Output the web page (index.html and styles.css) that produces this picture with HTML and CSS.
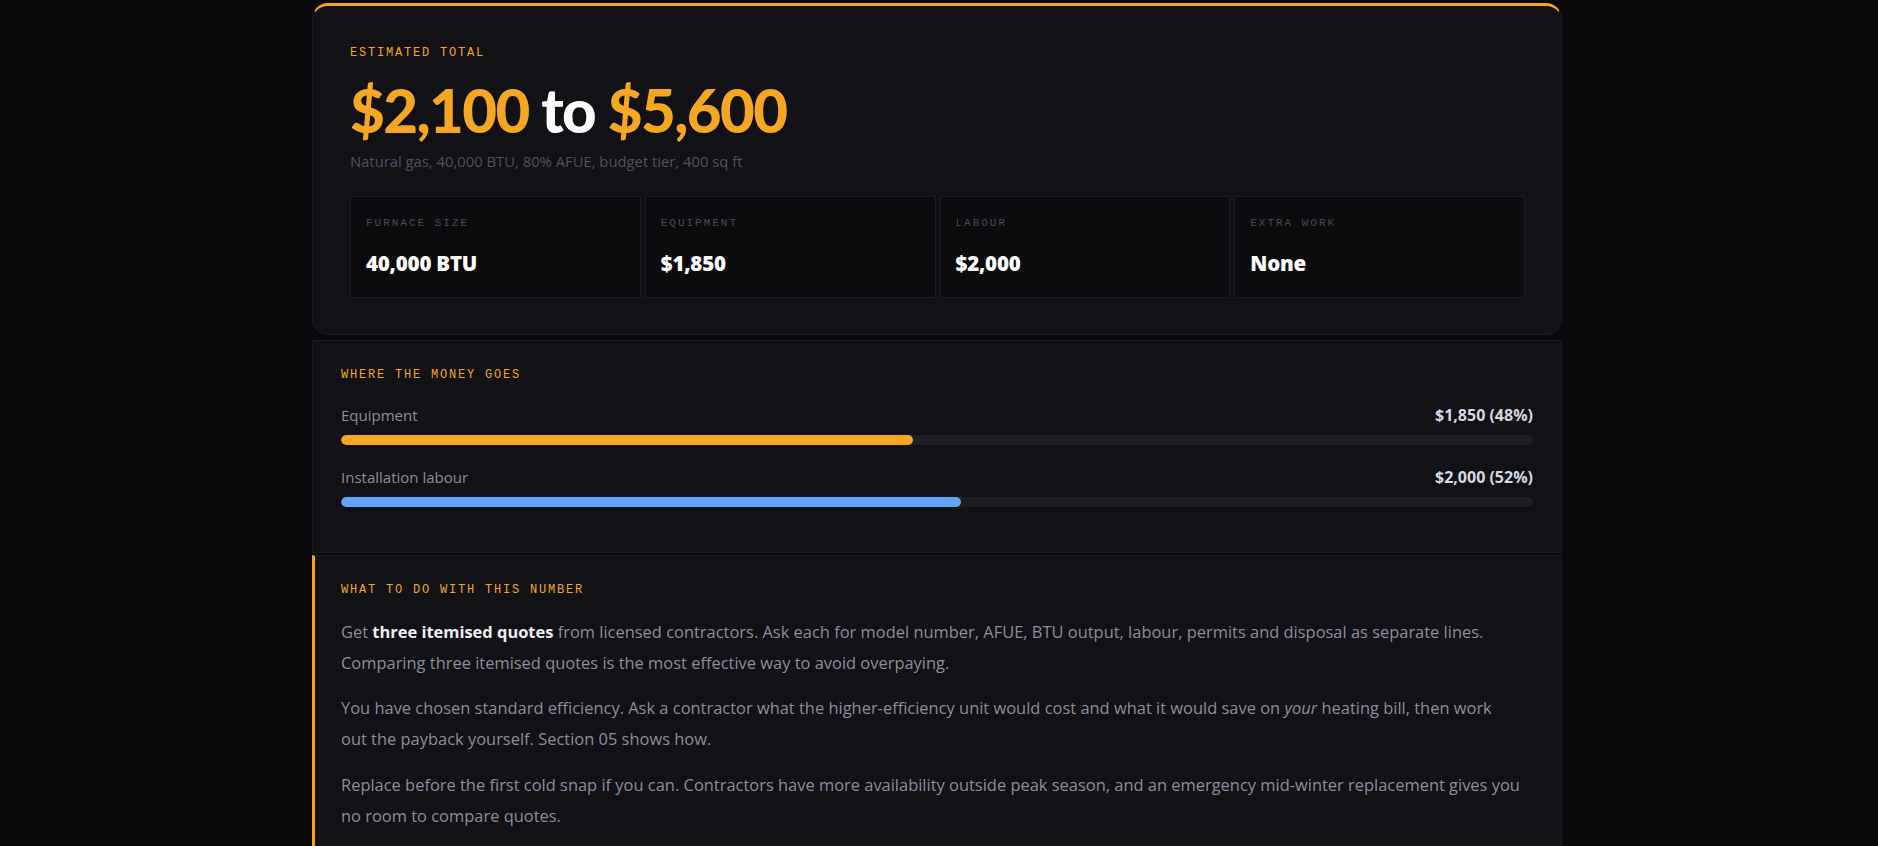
FILE: index.html
```html
<!DOCTYPE html>
<html lang="en">
<head>
<meta charset="utf-8">
<title>Furnace estimate</title>
<link rel="stylesheet" href="styles.css">
</head>
<body>
<main class="wrap">
  <section class="card total">
    <div class="label">Estimated total</div>
    <div class="big"><span class="amt">$2,100</span> <span class="to">to</span> <span class="amt">$5,600</span></div>
    <p class="sub">Natural gas, 40,000 BTU, 80% AFUE, budget tier, 400 sq ft</p>
    <div class="stats">
      <div class="stat"><div class="stat-label">Furnace size</div><div class="stat-value">40,000 BTU</div></div>
      <div class="stat"><div class="stat-label">Equipment</div><div class="stat-value">$1,850</div></div>
      <div class="stat"><div class="stat-label">Labour</div><div class="stat-value">$2,000</div></div>
      <div class="stat"><div class="stat-label">Extra work</div><div class="stat-value">None</div></div>
    </div>
  </section>

  <section class="card money">
    <div class="label">Where the money goes</div>
    <div class="row">
      <div class="row-head"><span class="row-name">Equipment</span><span class="row-val">$1,850 (48%)</span></div>
      <div class="track"><div class="fill fill-orange" style="width:48%"></div></div>
    </div>
    <div class="row">
      <div class="row-head"><span class="row-name">Installation labour</span><span class="row-val">$2,000 (52%)</span></div>
      <div class="track"><div class="fill fill-blue" style="width:52%"></div></div>
    </div>
  </section>

  <section class="card advice">
    <div class="label">What to do with this number</div>
    <p>Get <strong>three itemised quotes</strong> from licensed contractors. Ask each for model number, AFUE, BTU output, labour, permits and disposal as separate lines. Comparing three itemised quotes is the most effective way to avoid overpaying.</p>
    <p>You have chosen standard efficiency. Ask a contractor what the higher-efficiency unit would cost and what it would save on <em>your</em> heating bill, then work out the payback yourself. Section 05 shows how.</p>
    <p>Replace before the first cold snap if you can. Contractors have more availability outside peak season, and an emergency mid-winter replacement gives you no room to compare quotes.</p>
  </section>
</main>
</body>
</html>
```

FILE: styles.css
```css
* { box-sizing: border-box; }
html, body { margin: 0; padding: 0; }
body {
  background: #0a0a0c;
  font-family: "Open Sans", "Noto Sans", "Liberation Sans", sans-serif;
  color: #8b8f9c;
  padding: 3px 4px 0 0;
}
.wrap {
  width: 1250px;
  margin: 0 auto;
  display: flex;
  flex-direction: column;
}
.card {
  background: #111116;
  border: 1px solid #1c1c22;
}
.label {
  font-family: "Liberation Mono", "Courier New", monospace;
  font-size: 12px;
  line-height: 14px;
  letter-spacing: 0.15em;
  text-transform: uppercase;
  color: #f5a623;
}
.total {
  border-top: 3px solid #f5a623;
  border-radius: 16px;
  padding: 40px 36px 36px 37px;
}
.big {
  margin-top: 14px;
  font-family: Lato, "Open Sans", sans-serif;
  font-weight: 900;
  font-size: 60px;
  line-height: 72px;
  letter-spacing: -1.6px;
}
.amt { color: #f5a623; }
.to { color: #ffffff; }
.sub {
  margin: 5px 0 0;
  font-size: 14.8px;
  line-height: 20px;
  color: #4e5261;
}
.stats {
  margin-top: 25px;
  display: grid;
  grid-template-columns: repeat(4, 1fr);
  gap: 4px;
}
.stat {
  background: #0c0c0f;
  border: 1px solid #1c1c22;
  height: 102px;
  padding: 19px 15px 0;
}
.stat-label {
  font-family: "Liberation Mono", "Courier New", monospace;
  font-size: 11px;
  line-height: 14px;
  letter-spacing: 0.18em;
  text-transform: uppercase;
  color: #4a4b55;
}
.stat-value {
  margin-top: 20px;
  font-weight: 800;
  font-size: 20.5px;
  line-height: 26px;
  color: #ffffff;
  letter-spacing: -0.2px;
}
.money {
  margin-top: 5px;
  padding: 27px 28px 23px;
}
.money .label { margin-bottom: 23px; }
.row { margin-bottom: 22px; }
.row-head {
  display: flex;
  justify-content: space-between;
  align-items: center;
  font-size: 15px;
  line-height: 20px;
  margin-bottom: 10px;
}
.row-name { color: #8b8f9c; }
.row-val { color: #d4d8e0; font-weight: 700; font-size: 16px; }
.track {
  height: 10px;
  border-radius: 5px;
  background: #1d1d23;
  overflow: hidden;
}
.fill { height: 100%; border-radius: 5px; }
.fill-orange { background: #f5a623; }
.fill-blue { background: #60a5fa; }
.advice {
  margin-top: 2px;
  border-left: 3px solid #f5a623;
  padding: 27px 40px 30px 26px;
}
.advice .label { margin-bottom: 18.5px; }
.advice p {
  margin: 0 0 14.5px;
  font-size: 16.45px;
  line-height: 31px;
  color: #8b8f9c;
}
.advice strong { color: #eceef3; font-weight: 700; }
.advice em { font-style: italic; }
```
